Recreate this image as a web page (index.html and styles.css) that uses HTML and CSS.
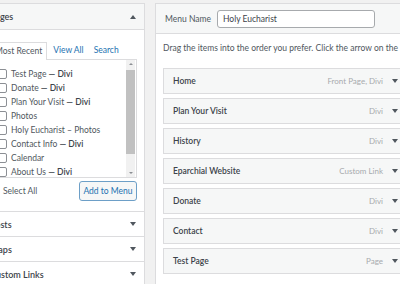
FILE: index.html
```html
<!DOCTYPE html>
<html lang="en">
<head>
  <meta charset="utf-8" />
  <title>Menus</title>
  <meta name="viewport" content="width=device-width, initial-scale=1.0" />
  <link rel="stylesheet" href="styles.css">
</head>

<body>
  <div class="page">
    <div class="side">
      <div class="accordion">
        <div class="acc-head open">
          <span>Pages</span>
          <i class="caret up"></i>
        </div>
        <div class="acc-body">
          <div class="tabs">
            <span class="tab active">Most Recent</span>
            <a class="tab">View All</a>
            <a class="tab">Search</a>
          </div>
          <div class="tab-panel">
            <ul class="checklist">
              <li><span class="cb"></span><span>Test Page <b>— Divi</b></span></li>
              <li><span class="cb"></span><span>Donate <b>— Divi</b></span></li>
              <li><span class="cb"></span><span>Plan Your Visit <b>— Divi</b></span></li>
              <li><span class="cb"></span><span>Photos</span></li>
              <li><span class="cb"></span><span>Holy Eucharist – Photos</span></li>
              <li><span class="cb"></span><span>Contact Info <b>— Divi</b></span></li>
              <li><span class="cb"></span><span>Calendar</span></li>
              <li><span class="cb"></span><span>About Us <b>— Divi</b></span></li>
            </ul>
            <div class="scrollbar">
              <i class="sb-arrow up"></i>
              <div class="sb-track"><div class="sb-thumb"></div></div>
              <i class="sb-arrow"></i>
            </div>
          </div>
          <div class="actions">
            <span class="select-all">Select All</span>
            <button class="add-btn">Add to Menu</button>
          </div>
        </div>
        <div class="acc-head"><span>Posts</span><i class="caret"></i></div>
        <div class="acc-head"><span>Maps</span><i class="caret"></i></div>
        <div class="acc-head"><span>Custom Links</span><i class="caret"></i></div>
      </div>
    </div>

    <div class="main">
      <div class="menu-header">
        <label class="menu-label">Menu Name</label>
        <input class="menu-input" type="text" value="Holy Eucharist" />
      </div>
      <div class="menu-body">
        <p class="hint">Drag the items into the order you prefer. Click the arrow on the right of the item to reveal additional configuration options.</p>
        <ul class="menu-items">
          <li class="menu-item"><span class="item-title">Home</span><span class="item-type">Front Page, Divi</span><i class="caret"></i></li>
          <li class="menu-item"><span class="item-title">Plan Your Visit</span><span class="item-type">Divi</span><i class="caret"></i></li>
          <li class="menu-item"><span class="item-title">History</span><span class="item-type">Divi</span><i class="caret"></i></li>
          <li class="menu-item"><span class="item-title">Eparchial Website</span><span class="item-type">Custom Link</span><i class="caret"></i></li>
          <li class="menu-item"><span class="item-title">Donate</span><span class="item-type">Divi</span><i class="caret"></i></li>
          <li class="menu-item"><span class="item-title">Contact</span><span class="item-type">Divi</span><i class="caret"></i></li>
          <li class="menu-item"><span class="item-title">Test Page</span><span class="item-type">Page</span><i class="caret"></i></li>
        </ul>
      </div>
    </div>
  </div>
</body>
</html>
```

FILE: styles.css
```css
html, body {
  margin: 0;
  padding: 0;
  width: 400px;
  height: 284px;
  overflow: hidden;
  background-color: #f1f1f1;
  font-family: "Lato", "Noto Sans", sans-serif;
  font-size: 8.5px;
  color: #50575e;
}

.page {
  display: flex;
  align-items: flex-start;
  gap: 10px;
  padding-top: 3px;
}

/* left column: add items */
.side {
  width: 167px;
  margin-left: -22px;
  flex-shrink: 0;
}

.accordion {
  background-color: white;
  border: 1px solid #dcdcde;
}

.acc-head {
  display: flex;
  justify-content: space-between;
  align-items: center;
  height: 24px;
  padding: 0 8px 0 11px;
  border-top: 1px solid #dcdcde;
  background-color: white;
  font-size: 9px;
  font-weight: 600;
  color: #3c434a;
  white-space: nowrap;
}

.acc-head.open {
  border-top: none;
  height: 25px;
  background-color: #f6f7f7;
  border-bottom: 1px solid #dcdcde;
}

.caret {
  width: 0;
  height: 0;
  border-left: 3px solid transparent;
  border-right: 3px solid transparent;
  border-top: 4px solid #50575e;
}

.caret.up {
  border-top: none;
  border-bottom: 4px solid #50575e;
}

.acc-body {
  padding: 11px 7px 10px 11px;
}

.tabs {
  display: flex;
  align-items: flex-end;
  gap: 2px;
  height: 18px;
  white-space: nowrap;
}

.tab {
  padding: 0 4px;
  line-height: 17px;
  color: #2271b1;
}

.tab.active {
  color: #50575e;
  background-color: white;
  border: 1px solid #dcdcde;
  border-bottom: none;
  margin-bottom: -1px;
  position: relative;
}

.tab-panel {
  display: flex;
  height: 117px;
  border: 1px solid #dcdcde;
  background-color: white;
  overflow: hidden;
}

.checklist {
  flex: 1;
  list-style: none;
  margin: 0;
  padding: 7px 0 0 6px;
}

.checklist li {
  display: flex;
  align-items: center;
  gap: 4px;
  height: 14px;
  white-space: nowrap;
  color: #50575e;
}

.checklist b {
  font-weight: 600;
  color: #3c434a;
}

.cb {
  width: 8px;
  height: 8px;
  border: 1px solid #8c8f94;
  border-radius: 2px;
  background-color: white;
  flex-shrink: 0;
}

.scrollbar {
  display: flex;
  flex-direction: column;
  align-items: center;
  width: 9px;
  margin-right: 1px;
  background-color: #f1f1f1;
}

.sb-arrow {
  margin: 3px 0;
  border-left: 2px solid transparent;
  border-right: 2px solid transparent;
  border-top: 2px solid #8c8f94;
}

.sb-arrow.up {
  border-top: none;
  border-bottom: 2px solid #8c8f94;
}

.sb-track {
  flex: 1;
  width: 100%;
}

.sb-thumb {
  height: 84px;
  margin-top: 2px;
  background-color: #c1c1c1;
}

.actions {
  display: flex;
  justify-content: space-between;
  align-items: center;
  margin-top: 3px;
  padding-left: 13px;
}

.select-all {
  color: #50575e;
}

.add-btn {
  width: 58px;
  height: 20px;
  padding: 0;
  border: 1px solid #6d9fc7;
  border-radius: 3px;
  background-color: #f6f7f7;
  color: #2271b1;
  font-family: inherit;
  font-size: 8.5px;
}

/* right column: menu structure */
.main {
  width: 260px;
  flex-shrink: 0;
  background-color: white;
  border: 1px solid #dcdcde;
  height: 300px;
}

.menu-header {
  display: flex;
  align-items: center;
  gap: 6px;
  height: 29px;
  padding: 0 9px;
  background-color: #f6f7f7;
  border-bottom: 1px solid #dcdcde;
}

.menu-label {
  color: #50575e;
  white-space: nowrap;
}

.menu-input {
  box-sizing: border-box;
  width: 158px;
  height: 18px;
  padding: 0 5px;
  border: 1px solid #a7aaad;
  border-radius: 3px;
  font-family: inherit;
  font-size: 8.5px;
  color: #3c434a;
}

.menu-body {
  padding: 0 0 0 7px;
}

.hint {
  margin: 8px 0 14px;
  line-height: 12px;
  white-space: nowrap;
  color: #50575e;
}

.menu-items {
  list-style: none;
  margin: 0;
  padding: 0;
}

.menu-item {
  display: flex;
  align-items: center;
  box-sizing: border-box;
  width: 245px;
  height: 26px;
  margin-bottom: 4px;
  padding: 0 9px;
  background-color: #f6f7f7;
  border: 1px solid #dcdcde;
}

.item-title {
  flex: 1;
  font-weight: 600;
  color: #3c434a;
}

.item-type {
  margin-right: 9px;
  font-size: 8px;
  color: #a7aaad;
}
```
